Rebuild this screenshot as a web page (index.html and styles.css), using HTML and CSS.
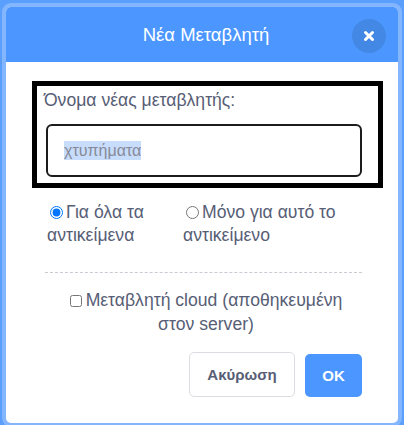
FILE: index.html
```html
<!DOCTYPE html>
<html lang="el">
<head>
<meta charset="utf-8">
<link rel="stylesheet" href="styles.css">
</head>
<body>
<div class="modal">
  <div class="header">
    <div class="title">Νέα Μεταβλητή</div>
    <div class="close">
      <svg width="12" height="12" viewBox="0 0 12 12"><path d="M2.5 2.5 L9.5 9.5 M9.5 2.5 L2.5 9.5" stroke="#fff" stroke-width="3" stroke-linecap="round"/></svg>
    </div>
  </div>
  <div class="body">
    <div class="focus-box">
      <div class="label">Όνομα νέας μεταβλητής:</div>
      <div class="text-input"><span class="sel">χτυπήματα</span></div>
    </div>
    <div class="radio-row">
      <label class="opt opt-1"><input type="radio" name="scope" checked>Για όλα τα αντικείμενα</label>
      <label class="opt opt-2"><input type="radio" name="scope">Μόνο για αυτό το αντικείμενο</label>
    </div>
    <div class="divider"></div>
    <div class="cloud-row">
      <label><input type="checkbox">Μεταβλητή cloud (αποθηκευμένη στον server)</label>
    </div>
    <div class="buttons">
      <button class="btn cancel">Ακύρωση</button>
      <button class="btn ok">OK</button>
    </div>
  </div>
</div>
</body>
</html>
```

FILE: styles.css
```css
html, body {
  margin: 0;
  padding: 0;
}
body {
  background: #5b9ffd;
  width: 404px;
  height: 425px;
  overflow: hidden;
  font-family: "Liberation Sans", Arial, sans-serif;
  color: #575e75;
}
.modal {
  margin: 3px 2px 0 2px;
  height: 424px;
  box-sizing: border-box;
  border: 4px solid #84b6ff;
  border-radius: 9px;
  background: #fff;
  overflow: hidden;
}
.header {
  position: relative;
  height: 55px;
  background: #4c97ff;
  display: flex;
  align-items: center;
  justify-content: center;
}
.title {
  color: #fff;
  font-size: 18.5px;
  margin-left: 8px;
}
.close {
  position: absolute;
  right: 12px;
  top: 12px;
  width: 34px;
  height: 34px;
  border-radius: 50%;
  background: #4488e6;
  display: flex;
  align-items: center;
  justify-content: center;
}
.body {
  padding: 19px 0 0 26px;
}
.focus-box {
  width: 351px;
  box-sizing: border-box;
  border: 5px solid #000;
  padding: 2px 16px 6px 7px;
}
.label {
  font-size: 17.6px;
  line-height: 24px;
  color: #575e75;
}
.text-input {
  margin: 12px 0 0 2px;
  height: 53px;
  box-sizing: border-box;
  border: 2px solid #1c1c1c;
  border-radius: 6px;
  display: flex;
  align-items: center;
  padding-left: 16px;
  font-size: 16px;
  color: #868a99;
}
.sel {
  background: #c8dcfb;
  line-height: 19px;
}
.radio-row {
  display: flex;
  gap: 16px;
  margin: 13px 0 0 15px;
  font-size: 17.6px;
  line-height: 23px;
}
.opt {
  display: block;
}
.opt-1 { width: 120px; }
.opt-2 { width: 179px; }
.opt input {
  margin: 0 3px 0 3px;
  width: 13px;
  height: 13px;
  vertical-align: -1px;
}
.divider {
  margin: 25px 0 0 13px;
  width: 317px;
  border-top: 1px dashed #c9cbd3;
}
.cloud-row {
  margin: 15px 0 0 24px;
  width: 300px;
  text-align: center;
  font-size: 17.6px;
  line-height: 24px;
}
.cloud-row input {
  margin: 0 4px 0 0;
  width: 12px;
  height: 12px;
  vertical-align: -1px;
}
.buttons {
  display: flex;
  justify-content: flex-end;
  align-items: flex-start;
  gap: 10px;
  width: 330px;
  margin-top: 16px;
}
.btn {
  font-family: "Liberation Sans", Arial, sans-serif;
  font-weight: bold;
  font-size: 15px;
  border-radius: 5px;
  cursor: pointer;
}
.cancel {
  width: 106px;
  height: 45px;
  background: #fff;
  border: 1px solid #dcdde2;
  color: #575e75;
}
.ok {
  margin-top: 2px;
  width: 57px;
  height: 43px;
  background: #4c97ff;
  border: none;
  color: #fff;
}
```
